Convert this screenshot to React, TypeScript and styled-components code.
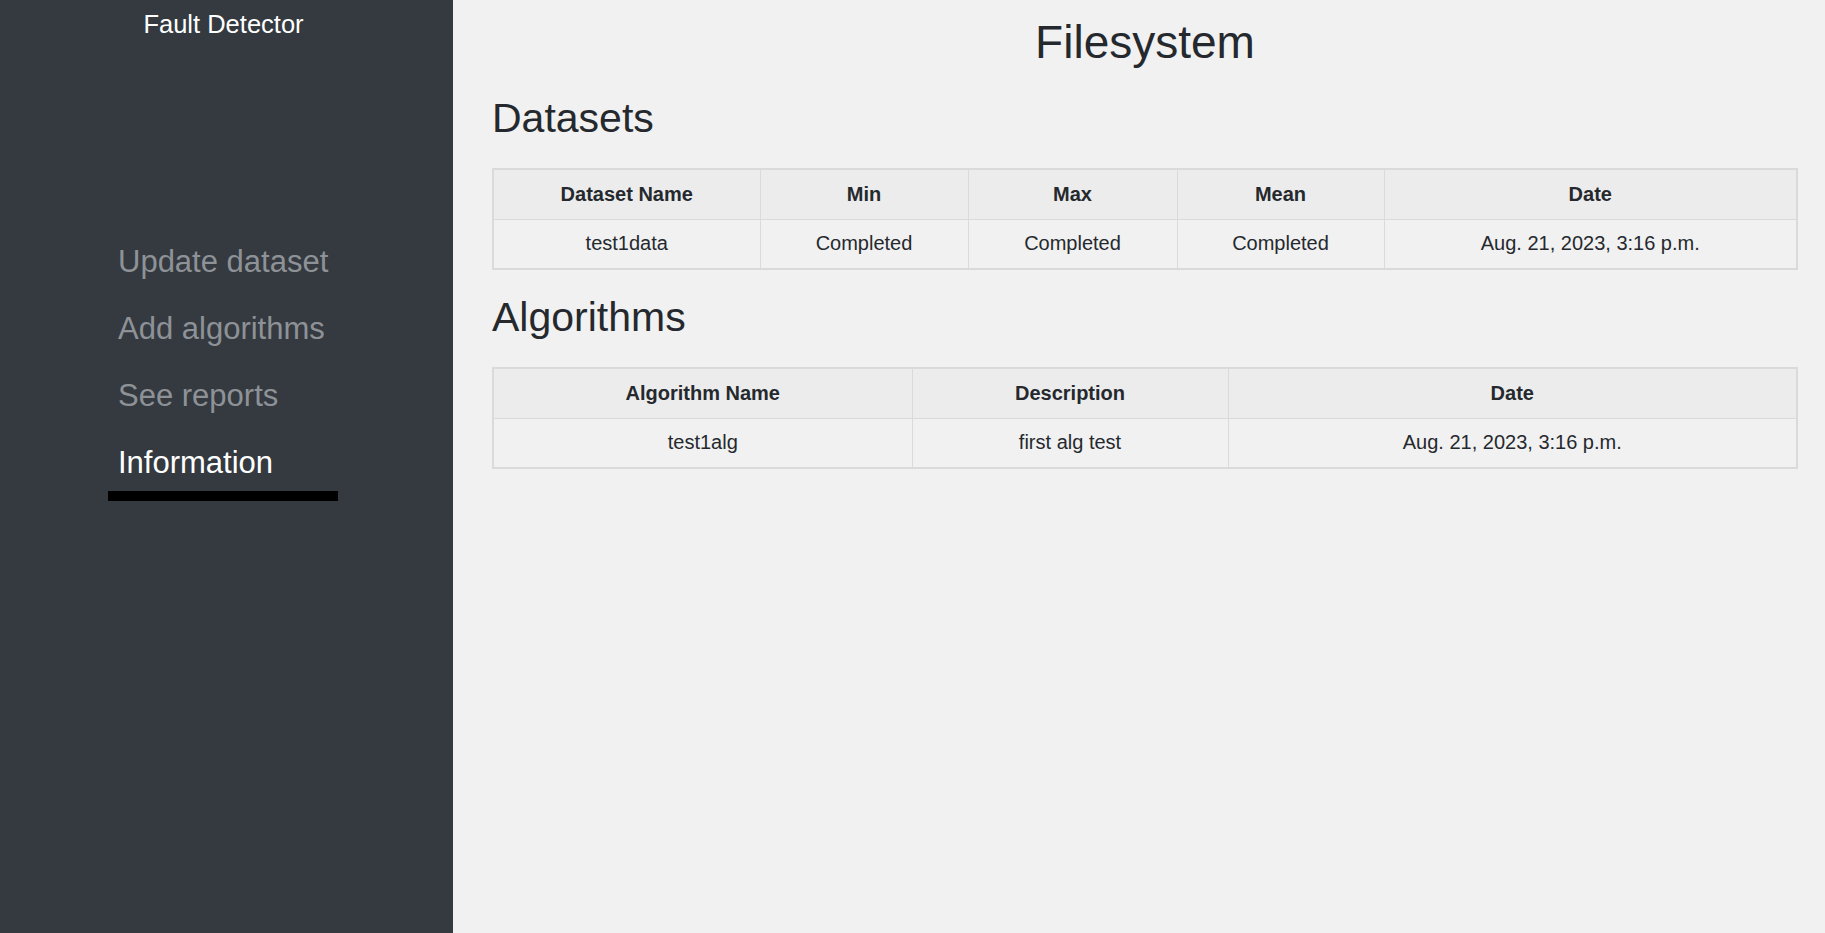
import React from "react";
import styled, { createGlobalStyle } from "styled-components";

const GlobalStyle = createGlobalStyle`
  html, body {
    margin: 0;
    padding: 0;
    background: #f1f1f1;
    font-family: "Liberation Sans", Arial, Helvetica, sans-serif;
  }
  * { box-sizing: border-box; }
`;

const Layout = styled.div`
  display: flex;
  min-height: 100vh;
`;

const Sidebar = styled.aside`
  width: 453px;
  flex-shrink: 0;
  background: #343a40;
  display: flex;
  flex-direction: column;
  padding-top: 10px;
`;

const Brand = styled.div`
  color: #ffffff;
  font-size: 25.5px;
  text-align: center;
  padding-right: 6px;
`;

const Nav = styled.nav`
  display: flex;
  flex-direction: column;
  gap: 11px;
  margin-top: 205px;
  margin-left: 108px;
`;

const NavLink = styled.a<{ $active?: boolean }>`
  display: block;
  width: 230px;
  padding: 0 0 10px 10px;
  font-size: 31px;
  text-decoration: none;
  color: ${(p) => (p.$active ? "#ffffff" : "#8e9297")};
  border-bottom: 10px solid ${(p) => (p.$active ? "#000000" : "transparent")};
`;

const Main = styled.main`
  flex: 1;
  padding: 15px 29px 40px 39px;
  color: #25292e;
`;

const Title = styled.h1`
  margin: 0 0 26px;
  font-size: 46px;
  font-weight: 400;
  text-align: center;
`;

const SectionTitle = styled.h2`
  margin: 0 0 26px;
  font-size: 41px;
  font-weight: 400;
`;

const Table = styled.table`
  width: 100%;
  table-layout: fixed;
  border-collapse: collapse;
  border: 2px solid #dadada;
  margin-bottom: 24px;
  font-size: 20px;
`;

const Col = styled.col<{ $w: number }>`
  width: ${(p) => p.$w}px;
`;

const Th = styled.th`
  height: 50px;
  background: #ececec;
  border: 1px solid #dadada;
  font-weight: 700;
  text-align: center;
  color: #25292e;
  padding: 0 8px;
`;

const Td = styled.td`
  height: 50px;
  background: #f1f1f1;
  border: 1px solid #dadada;
  text-align: center;
  color: #25292e;
  padding: 0 8px;
`;

const datasetCols = [267, 208, 209, 207, 413];
const algorithmCols = [419, 316, 569];

export default function App() {
  return (
    <>
      <GlobalStyle />
      <Layout>
        <Sidebar>
          <Brand>Fault Detector</Brand>
          <Nav>
            <NavLink href="#">Update dataset</NavLink>
            <NavLink href="#">Add algorithms</NavLink>
            <NavLink href="#">See reports</NavLink>
            <NavLink href="#" $active>
              Information
            </NavLink>
          </Nav>
        </Sidebar>
        <Main>
          <Title>Filesystem</Title>
          <SectionTitle>Datasets</SectionTitle>
          <Table>
            <colgroup>
              {datasetCols.map((w, i) => (
                <Col key={i} $w={w} />
              ))}
            </colgroup>
            <thead>
              <tr>
                <Th>Dataset Name</Th>
                <Th>Min</Th>
                <Th>Max</Th>
                <Th>Mean</Th>
                <Th>Date</Th>
              </tr>
            </thead>
            <tbody>
              <tr>
                <Td>test1data</Td>
                <Td>Completed</Td>
                <Td>Completed</Td>
                <Td>Completed</Td>
                <Td>Aug. 21, 2023, 3:16 p.m.</Td>
              </tr>
            </tbody>
          </Table>
          <SectionTitle>Algorithms</SectionTitle>
          <Table>
            <colgroup>
              {algorithmCols.map((w, i) => (
                <Col key={i} $w={w} />
              ))}
            </colgroup>
            <thead>
              <tr>
                <Th>Algorithm Name</Th>
                <Th>Description</Th>
                <Th>Date</Th>
              </tr>
            </thead>
            <tbody>
              <tr>
                <Td>test1alg</Td>
                <Td>first alg test</Td>
                <Td>Aug. 21, 2023, 3:16 p.m.</Td>
              </tr>
            </tbody>
          </Table>
        </Main>
      </Layout>
    </>
  );
}
